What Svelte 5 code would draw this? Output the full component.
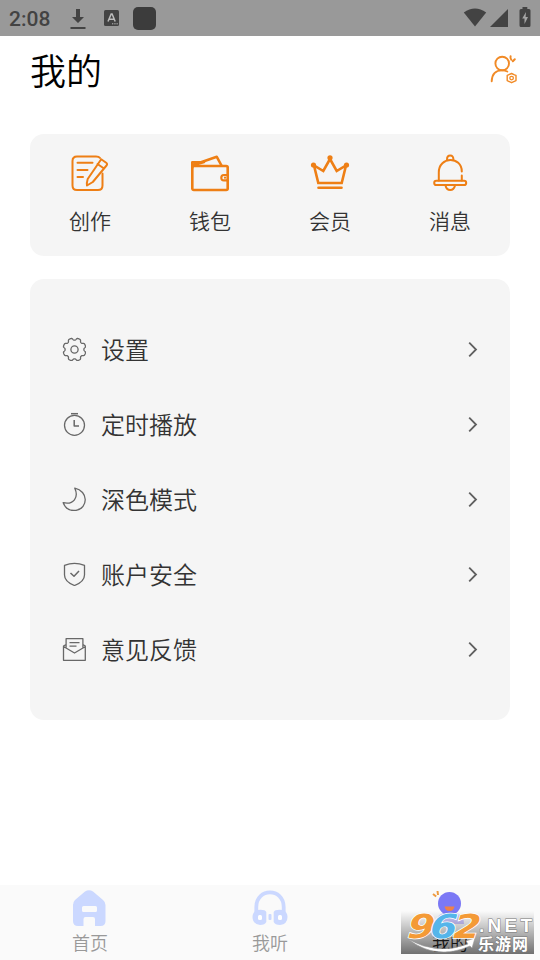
<script>
  const shortcuts = [
    { label: '创作', icon: 'write' },
    { label: '钱包', icon: 'wallet' },
    { label: '会员', icon: 'crown' },
    { label: '消息', icon: 'bell' }
  ];
  const rows = [
    { label: '设置', icon: 'gear' },
    { label: '定时播放', icon: 'timer' },
    { label: '深色模式', icon: 'moon' },
    { label: '账户安全', icon: 'shield' },
    { label: '意见反馈', icon: 'mail' }
  ];

  // Eight soft teeth, with a valley at the top centre.
  function gearPath() {
    const points = [];
    for (let i = 0; i < 160; i++) {
      const a = (i / 160) * Math.PI * 2;
      const r = 10.4 + 1.1 * Math.tanh(2 * (0.25 - Math.cos(8 * a)));
      points.push(`${(12 + r * Math.sin(a)).toFixed(2)} ${(12 - r * Math.cos(a)).toFixed(2)}`);
    }
    return `M${points.join('L')}Z`;
  }
  const gear = gearPath();
</script>

<div class="screen">
  <header class="status">
    <span class="clock">2:08</span>
    <svg class="download" width="16" height="22" viewBox="0 0 16 22"><path d="M6 1h4v8h4l-6 6-6-6h4zM0.5 19h15v2h-15z" fill="#434343" /></svg>
    <svg class="lang" width="15" height="16" viewBox="0 0 15 16">
      <rect width="15" height="16" rx="1.5" fill="#434343" />
      <path d="M4 11.5L7.2 4h.9l3.1 7.5M5 9.2h5" fill="none" stroke="#bbb" stroke-width="1.5" />
      <path d="M8 13.8h1.3M10.3 13.8h1.3M12.5 13.8h1.3" stroke="#bbb" />
    </svg>
    <span class="app-dot"></span>
    <span class="grow"></span>
    <svg class="wifi" width="24" height="19" viewBox="0 0 24 19"><path d="M0.8 4.5Q12-3.5 23.2 4.5L12 18.4Z" fill="#434343" /></svg>
    <svg class="signal" width="18" height="18" viewBox="0 0 18 18"><path d="M0 18L18 0V18Z" fill="#434343" /></svg>
    <svg class="battery" width="12" height="20" viewBox="0 0 12 20">
      <path d="M3.5 0h4.8v2H10q1.500 0 1.500 1.500v15Q11.500 20 10 20H2Q.5 20 .5 18.500v-15Q.5 2 2 2h1.500z" fill="#434343" />
      <path d="M7 5L3.200 11.500H5.500V17L9 10H6.600z" fill="#a5a5a5" />
    </svg>
  </header>

  <div class="title">
    <h1>我的</h1>
    <svg class="profile" width="28" height="29" viewBox="0 0 28 29" fill="none" stroke="#f18a26" stroke-linecap="round">
      <circle cx="12.200" cy="8.500" r="6.800" stroke-width="1.900" />
      <path d="M1.700 26.300C2 19 6 15.400 12 15.400Q15 15.400 17.300 16.500" stroke-width="1.900" />
      <path d="M20.600 1.300Q20 3.500 21.300 4.700M24.800 4.200L22.800 6.200" stroke-width="2" />
      <path d="M21.600 18.500L24.500 19.800L26 20.400V25.600L21.600 27.700L17.200 25.600V20.400Z" stroke-width="1.400" stroke-linejoin="round" />
      <circle cx="21.600" cy="23.100" r="1.800" stroke-width="1.300" />
    </svg>
  </div>

  <section class="shortcuts">
    {#each shortcuts as item}
      <div class="shortcut">
        <svg width="40" height="38" viewBox="0 -.5 40 38" fill="none" stroke="#ee7f15" stroke-width="2" stroke-linejoin="round" stroke-linecap="round">
          {#if item.icon === 'write'}
            <path d="M32.500 19V31Q32.500 35.500 28 35.500H7Q2.500 35.500 2.500 31V6.500Q2.500 2 7 2H26Q29 2 30 3.500" />
            <path d="M7.500 8.200H22.500M7.500 15.400H17.500M7.500 22.600H13" />
            <path d="M31.200 4.800L36.200 8.300Q37.800 9.500 36.500 11L22.800 27.500L17 31Q16.500 28.500 17.700 24.500ZM27.500 9.500L34 14" />
          {:else if item.icon === 'wallet'}
            <g stroke-width="2.600">
              <rect x="2.300" y="11.500" width="35.400" height="24" rx="1.500" />
              <path d="M2.300 13V7.700H11L26.800 2.300L31.500 11M4 10.500L14 7.500" />
              <path d="M37 20.500H33.800Q31.300 20.500 31.300 23.200T33.800 25.900H37" stroke-width="2.200" />
              <circle cx="35" cy="23.200" r=".5" stroke-width="1.200" />
            </g>
          {:else if item.icon === 'crown'}
            <path d="M4 11L8.300 28.500H31.700L36 11L26.700 16.500L20 4.500L13.300 16.500Z" stroke-width="2.600" stroke-linejoin="miter" />
            <g fill="#ee7f15" stroke="none"><circle cx="3.500" cy="10.500" r="2.600" /><circle cx="20" cy="3.300" r="2.600" /><circle cx="36.500" cy="10.500" r="2.600" /></g>
            <path d="M8.500 33.200H31.500" stroke-width="2.600" />
          {:else}
            <path d="M8.800 26V18C8.800 1.500 31.800 1.500 31.800 17M31.800 21V26" />
            <path d="M17 5Q17 1 20.200 1T23.400 5" />
            <rect x="4.200" y="26.300" width="32" height="4.200" rx="2.100" />
            <path d="M15.500 31Q16.500 35.500 20.200 35.500T25 31" />
          {/if}
        </svg>
        <span>{item.label}</span>
      </div>
    {/each}
  </section>

  <section class="menu">
    {#each rows as row}
      <div class="row">
        <svg width="24" height="24" viewBox="-.5 -.5 24 24" fill="none" stroke="#686868" stroke-width="1.300" stroke-linejoin="round">
          {#if row.icon === 'gear'}
            <path d={gear} /><circle cx="12" cy="12" r="3.600" />
          {:else if row.icon === 'timer'}
            <circle cx="12" cy="12.800" r="10" /><path d="M8.500 1.200H15.500" stroke-width="1.500" /><path d="M11.700 7.500V13.500H16.500" stroke-width="1.500" />
          {:else if row.icon === 'moon'}
            <path d="M12.300 .7C26 3.500 26 20.500 13.500 22.900Q4 24 .7 15.200C11 17.500 16.500 10 12.300 .7Z" />
          {:else if row.icon === 'shield'}
            <path d="M2 2.800Q12-1 22 2.800V12.500C22 17.500 18.500 20.500 12 23C5.500 20.500 2 17.500 2 12.500Z" /><path d="M8 10.500L11.500 13.800L16.500 8.500" stroke-width="1.500" />
          {:else}
            <path d="M3.600 11V1.200H20.400V11M3.600 7L1 8.500V22.800H22.800V8.500L20.400 7M1 9L12 15.500L23 9M7 5.200H17M7 8.700H14" />
          {/if}
        </svg>
        <span>{row.label}</span>
        <svg class="chevron" width="10" height="16" viewBox="0 -.5 10 16"><path d="M1.200 1.200L8 8L1.200 14.800" fill="none" stroke="#606060" stroke-width="1.800" /></svg>
      </div>
    {/each}
  </section>

  <nav>
    <div class="tab">
      <svg width="36" height="37" viewBox="1 0 36 37"><path fill-rule="evenodd" d="M14 1.500Q18-1.200 22 1.500L32 10Q34.500 12 34.500 15V31Q34.500 36 29.500 36H24V29Q24 27 22 27H14.500Q12.500 27 12.500 29V36H7Q2 36 2 31V15Q2 12 4 10ZM12.500 16Q11 16 11 17.500V20.500Q11 22 12.500 22H24.500Q26 22 26 20.500V17.500Q26 16 24.500 16Z" fill="#cbd8ff" /></svg>
      <span>首页</span>
    </div>
    <div class="tab">
      <svg width="36" height="37" viewBox="0 0 36 37">
        <path d="M4.300 24V17C4.300-2.500 31.700-2.500 31.700 17V24" fill="none" stroke="#cbd8ff" stroke-width="3.800" />
        <path d="M5 20Q13 19 14.300 22V32Q13 35 8 35Q.5 34 .5 27Q.5 22 5 20ZM31 20Q23 19 21.700 22V32Q23 35 28 35Q35.500 34 35.500 27Q35.500 22 31 20Z" fill="#cbd8ff" />
        <rect x="6" y="25" width="4" height="5" rx="1.500" fill="#fff" /><rect x="26" y="25" width="4" height="5" rx="1.500" fill="#fff" />
        <rect x="16.500" y="24" width="3" height="6" rx="1" fill="#cbd8ff" />
      </svg>
      <span>我听</span>
    </div>
    <div class="tab active">
      <svg width="36" height="37" viewBox="0 0 36 37">
        <path d="M4 34Q4 22 18 22T32 34Z" fill="#cbc6ff" />
        <circle cx="17.500" cy="13.500" r="11.500" fill="#7b78f5" />
        <path d="M12.500 16.500H22.500Q21.500 21 17.500 21T12.500 16.500Z" fill="#ef8148" />
        <path d="M5.500 1L6 5M1 4L4.200 6.500" stroke="#ee9b40" stroke-width="2" />
      </svg>
      <span>我的</span>
    </div>
  </nav>

  <div class="watermark">
    <svg width="133" height="43" viewBox="0 0 133 43">
      <defs>
        <linearGradient id="shade" x1="0" y1="0" x2="0" y2="1"><stop offset="0" stop-color="#000" stop-opacity="0" /><stop offset="1" stop-color="#000" stop-opacity=".55" /></linearGradient>
      </defs>
      <rect width="133" height="43" fill="url(#shade)" />
      <path d="M7 28Q36 45 67 33L65 30L74 27L71 37L69 35Q35 50 7 28Z" fill="#fff" stroke="#999" stroke-width=".6" />
      <g class="number">
        <text transform="translate(6 27) skewX(-5)" textLength="27" lengthAdjust="spacingAndGlyphs" fill="#f49a36">9</text>
        <text transform="translate(28.500 27) skewX(-5)" textLength="27" lengthAdjust="spacingAndGlyphs" fill="#55b5ea">6</text>
        <text transform="translate(52 27) skewX(-5)" textLength="27" lengthAdjust="spacingAndGlyphs" fill="#f49a36">2</text>
      </g>
      <text class="net" x="78" y="21" textLength="53">.NET</text>
      <text class="site" x="77" y="39" textLength="50">乐游网</text>
    </svg>
  </div>
</div>

<style>
  :global(body) { margin: 0; background: #fff; }
  .screen { position: relative; width: 540px; height: 960px; display: flex; flex-direction: column; overflow: hidden; background: #fff; font-family: "Noto Sans CJK SC", sans-serif; font-weight: 350; }
  svg { display: block; flex: none; }
  .status { height: 36px; box-sizing: border-box; padding: 0 10px 0 9px; display: flex; align-items: center; background: #999; flex: none; }
  .clock { font: 500 21px/36px Roboto, sans-serif; padding-top: 2px; color: #434343; width: 42px; }
  .download { margin-left: 19px; margin-top: 1px; }
  .lang { margin-left: 18px; }
  .app-dot { width: 23px; height: 23px; margin-left: 14px; border-radius: 5px; background: #3c3c3c; }
  .grow { flex: 1; }
  .wifi { margin-top: -2px; }
  .signal { margin-left: 3px; }
  .battery { margin: -2px -1px 0 11px; }
  .title { height: 98px; box-sizing: border-box; padding: 7px 22px 0 30px; display: flex; justify-content: space-between; flex: none; }
  h1 { margin: 0; font-size: 36px; line-height: 52px; font-weight: 350; color: #000; }
  .profile { margin-top: 12px; }
  .shortcuts { margin: 0 30px; height: 122px; flex: none; display: flex; background: #f5f5f5; border-radius: 14px; }
  .shortcut { flex: 1; display: flex; flex-direction: column; align-items: center; padding-top: 20px; }
  .shortcut span { margin-top: 13px; font-size: 21px; line-height: 30px; color: #333; }
  .menu { margin: 23px 30px 0; height: 441px; box-sizing: border-box; padding: 33px 32px 0; flex: none; background: #f5f5f5; border-radius: 14px; }
  .row { height: 75px; box-sizing: border-box; padding-bottom: 1px; display: flex; align-items: center; }
  .row span { margin-left: 15px; font-size: 24px; line-height: 36px; color: #333; flex: 1; }
  nav { margin-top: auto; height: 75px; flex: none; display: flex; background: #fafafa; }
  .tab { flex: 1; display: flex; flex-direction: column; align-items: center; padding-top: 5px; }
  .tab span { margin-top: 2px; font-size: 18px; line-height: 26px; color: #999; }
  .tab.active span { color: #222; }
  .watermark { position: absolute; left: 401px; top: 911px; }
  .watermark svg { overflow: visible; }
  .number { font: italic bold 33px "DejaVu Sans", sans-serif; stroke: #fff; stroke-width: 1.5; paint-order: stroke; }
  .net { font: bold 19px "Liberation Sans", sans-serif; fill: #fff; stroke: #777; stroke-width: 1; paint-order: stroke; }
  .site { font-size: 16px; font-weight: 700; fill: #fff; stroke: #777; stroke-width: 1; paint-order: stroke; }
</style>
